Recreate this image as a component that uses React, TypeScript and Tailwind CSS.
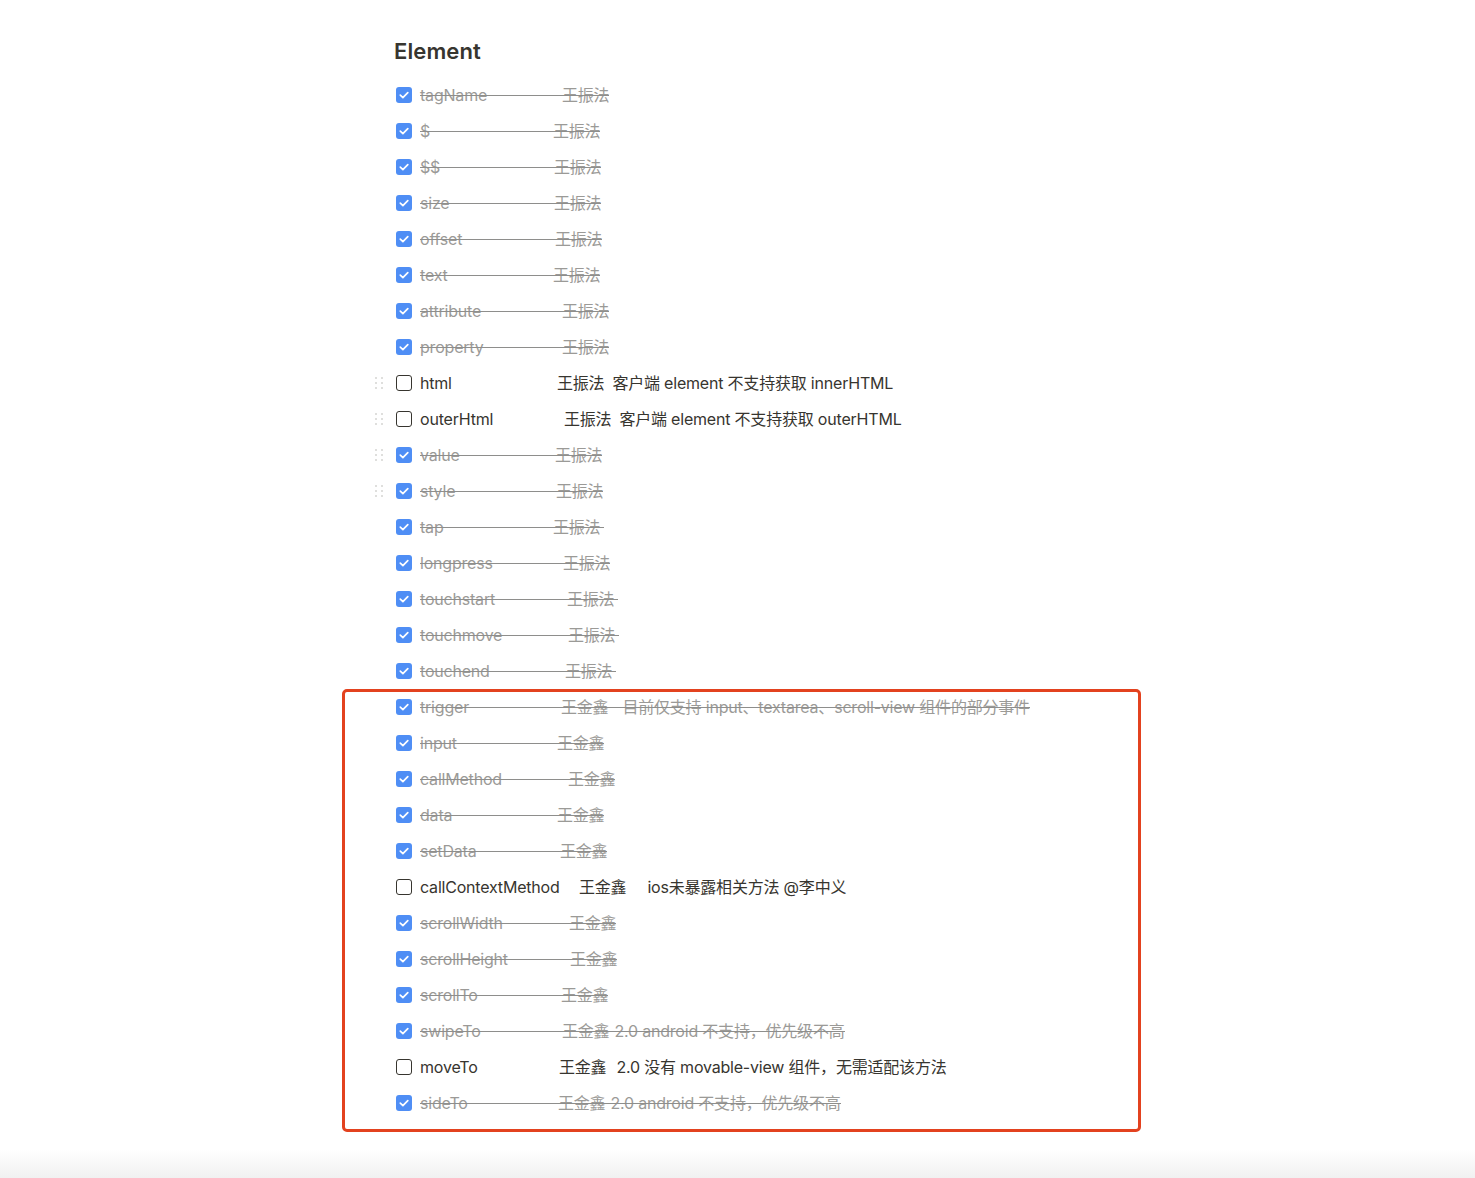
import React from 'react';

type Item = {
  name: string;
  done: boolean;
  at: number;
  author: string;
  note?: string;
  gap?: number;
  handle?: boolean;
  tail?: number;
};

const top: Item[] = [
  { name: 'tagName', done: true, at: 562, author: '王振法' },
  { name: '$', done: true, at: 553, author: '王振法' },
  { name: '$$', done: true, at: 554, author: '王振法' },
  { name: 'size', done: true, at: 554, author: '王振法' },
  { name: 'offset', done: true, at: 555, author: '王振法' },
  { name: 'text', done: true, at: 553, author: '王振法' },
  { name: 'attribute', done: true, at: 562, author: '王振法' },
  { name: 'property', done: true, at: 562, author: '王振法' },
  { name: 'html', done: false, at: 557, author: '王振法', note: '客户端 element 不支持获取 innerHTML', gap: 8, handle: true },
  { name: 'outerHtml', done: false, at: 564, author: '王振法', note: '客户端 element 不支持获取 outerHTML', gap: 8, handle: true },
  { name: 'value', done: true, at: 555, author: '王振法', handle: true },
  { name: 'style', done: true, at: 556, author: '王振法', handle: true },
  { name: 'tap', done: true, at: 553, author: '王振法', tail: 4 },
  { name: 'longpress', done: true, at: 563, author: '王振法' },
  { name: 'touchstart', done: true, at: 567, author: '王振法', tail: 4 },
  { name: 'touchmove', done: true, at: 568, author: '王振法', tail: 4 },
  { name: 'touchend', done: true, at: 565, author: '王振法', tail: 4 },
];

const boxed: Item[] = [
  { name: 'trigger', done: true, at: 561, author: '王金鑫', note: '目前仅支持 input、textarea、scroll-view 组件的部分事件', gap: 14 },
  { name: 'input', done: true, at: 557, author: '王金鑫' },
  { name: 'callMethod', done: true, at: 568, author: '王金鑫' },
  { name: 'data', done: true, at: 557, author: '王金鑫' },
  { name: 'setData', done: true, at: 560, author: '王金鑫' },
  { name: 'callContextMethod', done: false, at: 579, author: '王金鑫', note: 'ios未暴露相关方法 @李中义', gap: 21 },
  { name: 'scrollWidth', done: true, at: 569, author: '王金鑫' },
  { name: 'scrollHeight', done: true, at: 570, author: '王金鑫' },
  { name: 'scrollTo', done: true, at: 561, author: '王金鑫' },
  { name: 'swipeTo', done: true, at: 562, author: '王金鑫', note: '2.0 android 不支持，优先级不高', gap: 5 },
  { name: 'moveTo', done: false, at: 559, author: '王金鑫', note: '2.0 没有 movable-view 组件，无需适配该方法', gap: 10 },
  { name: 'sideTo', done: true, at: 558, author: '王金鑫', note: '2.0 android 不支持，优先级不高', gap: 5 },
];

const Handle = () => (
  <div className="ml-[5px] grid grid-cols-2 gap-x-[4px] gap-y-[3px]">
    {Array.from({ length: 6 }).map((_, i) => (
      <span key={i} className="h-[2px] w-[2px] rounded-full bg-[#d4d4d2]" />
    ))}
  </div>
);

const Check = ({ done }: { done: boolean }) =>
  done ? (
    <span className="flex h-4 w-4 flex-none items-center justify-center rounded-[3px] bg-[#4f8ef5]">
      <svg width="12" height="12" viewBox="0 0 12 12" fill="none">
        <path d="M2.3 6.2 4.9 8.7 9.8 3.6" stroke="white" strokeWidth="1.7" strokeLinecap="round" strokeLinejoin="round" />
      </svg>
    </span>
  ) : (
    <span className="h-4 w-4 flex-none rounded-[3px] border-[1.5px] border-[#37352f]" />
  );

const Row = ({ item }: { item: Item }) => (
  <div className="flex h-9 items-center">
    <div className="flex w-[26px] flex-none items-center">{item.handle && <Handle />}</div>
    <Check done={item.done} />
    <div
      className={`relative ml-2 flex items-center whitespace-nowrap text-base leading-6 tracking-[-0.2px] ${
        item.done ? 'text-[#9b9a97]' : 'text-[#37352f]'
      }`}
      style={{ paddingRight: item.tail ?? 0 }}
    >
      <span className="flex-none" style={{ width: item.at - 420 }}>
        {item.name}
      </span>
      <span>{item.author}</span>
      {item.note && <span style={{ marginLeft: item.gap }}>{item.note}</span>}
      {item.done && <span className="absolute left-0 right-0 top-1/2 h-px bg-[#8e8e8c]" />}
    </div>
  </div>
);

export default function App() {
  return (
    <div
      className="flex min-h-[1178px] w-full flex-col bg-white"
      style={{ fontFamily: 'Inter, "Noto Sans CJK SC", sans-serif' }}
    >
      <div className="ml-[370px] flex flex-col pt-[33px]">
        <h1 className="mb-2 h-9 pl-6 text-[22px] font-semibold leading-9 tracking-[0.1px] text-[#37352f]">Element</h1>
        {top.map((item) => (
          <Row key={item.name} item={item} />
        ))}
        <div className="-ml-[28px] w-[799px] rounded-[5px] border-[3px] border-[#e3421f] pb-2 pl-[25px]">
          <div className="-mt-[3px] flex flex-col">
            {boxed.map((item) => (
              <Row key={item.name} item={item} />
            ))}
          </div>
        </div>
      </div>
      <div className="mt-auto h-[28px] bg-gradient-to-b from-white to-[#f1f1f1]" />
    </div>
  );
}
